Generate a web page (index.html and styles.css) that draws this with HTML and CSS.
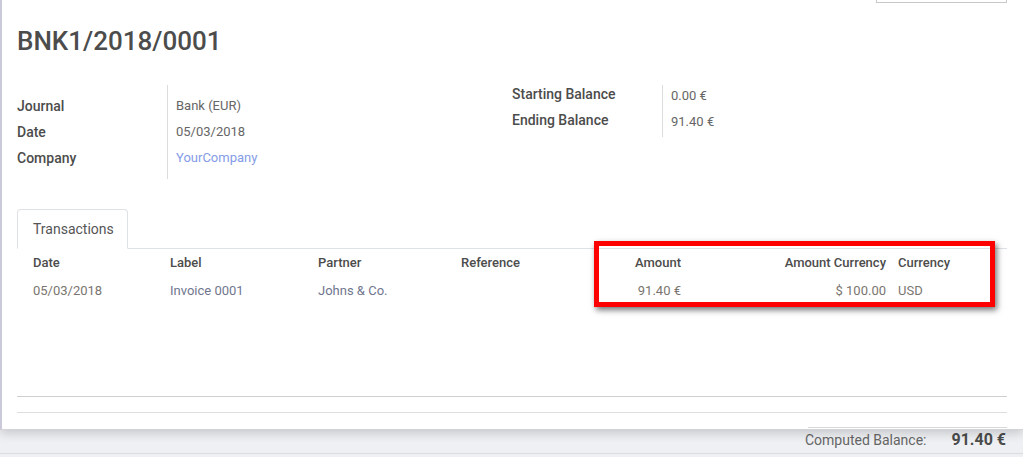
FILE: index.html
```html
<!DOCTYPE html>
<html>
<head>
<meta charset="utf-8">
<link rel="stylesheet" href="styles.css">
</head>
<body>
<div class="sheet">
  <div class="topbar"><div class="topbox"></div></div>
  <h1 class="title">BNK1/2018/0001</h1>
  <div class="groups">
    <div class="group left">
      <div class="labels">
        <div class="row">Journal</div>
        <div class="row">Date</div>
        <div class="row">Company</div>
      </div>
      <div class="vals">
        <div class="row">Bank (EUR)</div>
        <div class="row">05/03/2018</div>
        <div class="row link">YourCompany</div>
      </div>
    </div>
    <div class="group right">
      <div class="labels">
        <div class="row">Starting Balance</div>
        <div class="row">Ending Balance</div>
      </div>
      <div class="vals">
        <div class="row">0.00 €</div>
        <div class="row">91.40 €</div>
      </div>
    </div>
  </div>
  <div class="tabs">
    <div class="tab">Transactions</div>
  </div>
  <div class="table">
    <div class="trow head">
      <div>Date</div>
      <div>Label</div>
      <div>Partner</div>
      <div>Reference</div>
      <div class="num">Amount</div>
      <div class="num">Amount Currency</div>
      <div class="cur">Currency</div>
    </div>
    <div class="trow data">
      <div>05/03/2018</div>
      <div class="blu">Invoice 0001</div>
      <div class="blu">Johns &amp; Co.</div>
      <div></div>
      <div class="num">91.40 €</div>
      <div class="num">$ 100.00</div>
      <div class="cur">USD</div>
    </div>
    <div class="highlight"></div>
  </div>
  <div class="totals"></div>
  <div class="subtotal"></div>
</div>
<div class="footer">
  <span class="flabel">Computed Balance:</span>
  <span class="fval">91.40 €</span>
</div>
</body>
</html>
```
FILE: styles.css
```css
* { box-sizing: border-box; }
html, body { margin: 0; padding: 0; }
body {
  width: 1023px;
  height: 457px;
  overflow: hidden;
  background: #eef0f3;
  font-family: Roboto, "Open Sans", sans-serif;
  font-size: 13px;
  color: #4c4c4c;
}
.sheet {
  position: relative;
  background: #fff;
  border-left: 2px solid #c9c9d8;
  height: 430px;
  padding: 0 16px 0 15px;
  box-shadow: 0 3px 10px rgba(0,0,0,0.18);
  border-bottom: 1px solid #d4d4d8;
}
.topbar { display: flex; justify-content: flex-end; height: 3px; }
.topbox {
  width: 131px;
  height: 3px;
  border: 1px solid #c8c8c8;
  border-top: none;
}
.title {
  margin: 22px 0 0;
  font-size: 26px;
  font-weight: 500;
  line-height: 32px;
  color: #4c4c4c;
}
.groups {
  display: flex;
  margin-top: 23px;
  align-items: flex-start;
}
.group { width: 50%; display: flex; align-items: flex-start; }
.labels { width: 150px; font-weight: 500; font-size: 14px; color: #4c4c4c; }
.row { line-height: 26px; height: 26px; white-space: nowrap; }
.vals {
  border-left: 1px solid #dcdcdc;
  padding-left: 8px;
  color: #666;
}
.left .labels { padding-top: 13px; }
.left .vals { margin-top: 5px; padding-top: 8px; padding-bottom: 8px; }
.right .labels { padding-top: 1px; }
.right .vals { margin-top: 5px; padding-bottom: 2px; }
.right .vals .row:first-child { margin-top: -2px; }
.link { color: #849ce6; }
.tabs {
  margin-top: 30px;
  border-bottom: 1px solid #dee2e6;
  display: flex;
}
.tab {
  width: 111px;
  height: 40px;
  margin-bottom: -1px;
  border: 1px solid #dee2e6;
  border-bottom-color: #fff;
  border-radius: 4px 4px 0 0;
  padding-left: 15px;
  line-height: 38px;
  font-size: 14px;
  color: #555;
  background: #fff;
}
.table { position: relative; }
.trow {
  display: grid;
  grid-template-columns: 137px 148px 143px 140px 80px 205px 1fr;
  padding-left: 16px;
  white-space: nowrap;
}
.head { height: 27px; line-height: 27px; font-weight: 500; color: #4c4c4c; }
.data { height: 30px; line-height: 30px; color: #7a7570; }
.data .blu { color: #70768e; }
.num { text-align: right; }
.cur { padding-left: 12px; }
.highlight {
  position: absolute;
  left: 577px;
  top: -8px;
  width: 401px;
  height: 66px;
  border: 5px solid #ff0000;
  box-shadow: 2px 3px 6px rgba(0,0,0,0.55);
  pointer-events: none;
}
.totals {
  margin-top: 90px;
  height: 17px;
  border-top: 1px solid #cfcfcf;
  border-bottom: 1px solid #dedede;
}
.subtotal {
  margin-left: auto;
  margin-top: 14px;
  width: 199px;
  border-bottom: 1px solid #d8d8d8;
}
.footer {
  display: flex;
  justify-content: flex-end;
  align-items: baseline;
  gap: 25px;
  padding-right: 17px;
  height: 24px;
  line-height: 20px;
  border-bottom: 1px solid #dcdcdc;
}
.flabel { color: #666; font-size: 14px; }
.fval { font-weight: 700; font-size: 16px; color: #4c4c4c; }
```
